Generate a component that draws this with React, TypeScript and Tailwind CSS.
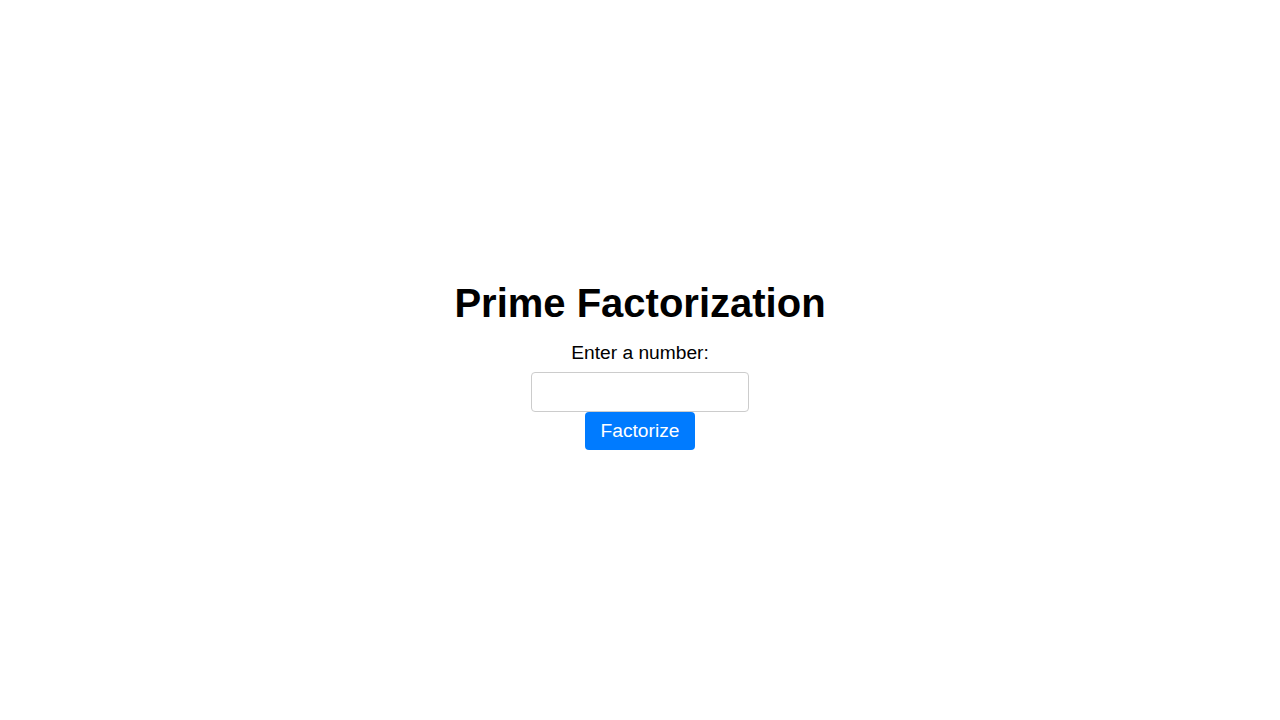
import React from "react";

export default function App() {
  return (
    <div
      className="flex h-screen flex-col items-center justify-center bg-white pt-[9px] text-black"
      style={{ fontFamily: '"Liberation Sans", Arial, sans-serif' }}
    >
      <h1 className="m-0 pt-[1px] text-[40px] font-bold leading-[46px]">Prime Factorization</h1>
      <label htmlFor="num" className="mt-[16px] block text-[19.2px] leading-[22px]">
        Enter a number:
      </label>
      <input
        id="num"
        type="number"
        className="mt-[8px] h-[40px] w-[218px] rounded-[4px] border border-[#ccc] bg-white px-2 text-[16px] outline-none"
      />
      <button className="h-[38px] w-[110px] rounded-[4px] bg-[#007bff] text-[19.2px] text-white">
        Factorize
      </button>
    </div>
  );
}
